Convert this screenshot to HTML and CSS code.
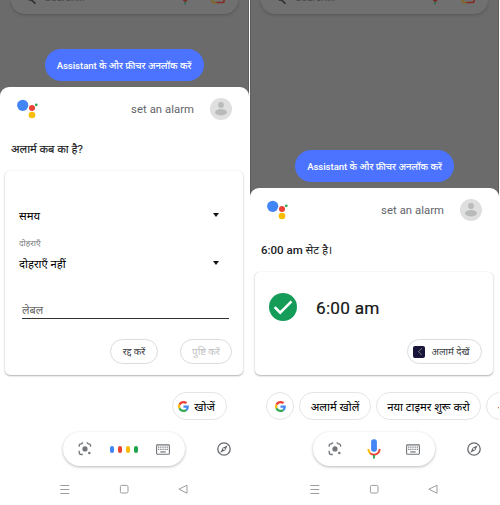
FILE: index.html
```html
<!DOCTYPE html>
<html lang="hi">
<head>
<meta charset="utf-8">
<title>Assistant</title>
<link rel="stylesheet" href="styles.css">
</head>
<body>
<svg class="defs" width="0" height="0" aria-hidden="true">
  <symbol id="logo" viewBox="0 0 22 21"><circle cx="5.7" cy="6.3" r="5.6" fill="#4285f4"/><circle cx="15" cy="9" r="3" fill="#ea4335"/><circle cx="19.3" cy="5.8" r="1.4" fill="#34a853"/><circle cx="15" cy="16" r="3.3" fill="#fbbc04"/></symbol>
  <symbol id="avatar" viewBox="0 0 22 22"><circle cx="11" cy="11" r="11" fill="#dfdfdf"/><circle cx="11" cy="7" r="2.9" fill="#b9bbbb"/><ellipse cx="11" cy="14.3" rx="5.9" ry="3.2" fill="#b9bbbb"/></symbol>
  <symbol id="google" viewBox="0 0 48 48"><path fill="#ea4335" d="M24 9.5c3.54 0 6.71 1.22 9.21 3.6l6.85-6.85C35.9 2.38 30.47 0 24 0 14.62 0 6.51 5.38 2.56 13.22l7.98 6.19C12.43 13.72 17.74 9.5 24 9.5z"/><path fill="#4285f4" d="M46.98 24.55c0-1.57-.15-3.09-.38-4.55H24v9.02h12.94c-.58 2.96-2.26 5.48-4.78 7.18l7.73 6c4.51-4.18 7.09-10.36 7.09-17.65z"/><path fill="#fbbc05" d="M10.53 28.59a14.5 14.5 0 0 1 0-9.18l-7.98-6.19a24 24 0 0 0 0 21.56l7.98-6.19z"/><path fill="#34a853" d="M24 48c6.48 0 11.93-2.13 15.89-5.81l-7.73-6c-2.15 1.45-4.92 2.3-8.16 2.3-6.26 0-11.57-4.22-13.47-9.91l-7.98 6.19C6.51 42.62 14.62 48 24 48z"/></symbol>
  <symbol id="lens" viewBox="0 0 14 14"><g fill="none" stroke="#72767a" stroke-width="1.3"><path d="M1.2 4.8V3.7Q1.2 1.8 3.1 1.8H3.6L4.5.9H5.2M8.6.9h.7l.9.9h.5q1.9 0 1.9 1.9v1.1M1.2 8.8v1.5q0 2.2 2.2 2.2h1.4"/></g><circle cx="7" cy="6.9" r="2.6" fill="#72767a"/><circle cx="11.3" cy="11.1" r="1.25" fill="#72767a"/></symbol>
  <symbol id="keyboard" viewBox="0 0 14 11"><rect x=".6" y=".9" width="12.8" height="9.3" rx=".8" fill="#fff" stroke="#72767a" stroke-width="1.1"/><path d="M2.1 3.2h9.9M2.1 5.4h9.9" stroke="#72767a" stroke-width="1.3" stroke-dasharray="1.2 .95"/><path d="M4.3 7.9h5.4" stroke="#72767a" stroke-width="1.2"/></symbol>
  <symbol id="compass" viewBox="0 0 14 14"><circle cx="7" cy="7" r="6.2" fill="none" stroke="#66696e" stroke-width="1.3"/><path fill="#66696e" fill-rule="evenodd" d="M10.7 3.3 8.3 8.3 3.3 10.7l2.4-5zM7 6.1a.9.9 0 1 0 0 1.8.9.9 0 0 0 0-1.8z"/></symbol>
  <symbol id="mic" viewBox="0 0 14 20"><rect x="4.1" y=".3" width="5.8" height="12.4" rx="2.6" fill="#4285f4"/><path d="M1.2 10Q1.6 13 3.4 14.4" fill="none" stroke="#fbbc04" stroke-width="1.9"/><path d="M3.2 14.2Q7 17.1 10.8 14.2 12.4 12.8 12.8 10" fill="none" stroke="#ea4335" stroke-width="1.9"/><path d="M7 16v3.4" stroke="#34a853" stroke-width="1.9"/></symbol>
  <symbol id="recents" viewBox="0 0 10 10"><path d="M.3 1.5h9M.3 5.5h9M.3 9.5h9" stroke="#929292" stroke-width=".9"/></symbol>
  <symbol id="home" viewBox="0 0 10 10"><rect x="1.4" y="1.4" width="7.6" height="7.6" rx="1.3" fill="none" stroke="#929292" stroke-width=".9"/></symbol>
  <symbol id="back" viewBox="0 0 10 10"><path d="M9 1.2v8L.9 5.2z" fill="none" stroke="#929292" stroke-width=".9"/></symbol>
  <symbol id="behind" viewBox="0 0 200 5"><path d="M.8 0h2.7l4 3.6" fill="none" stroke="#2b2d2e" stroke-width="1.5"/><path d="M154.7 0h5l-1.7 1.9h-1.6z" fill="#7d2c25"/><path d="M157.2 1.4v3" stroke="#2b6950" stroke-width="1.6"/><path d="M184.2 0v1q0 1.5 1.6 1.5h3" fill="none" stroke="#886317" stroke-width="1.6"/><path d="M188.5 2.5h6q1.6 0 1.6-1.5V0" fill="none" stroke="#842a21" stroke-width="1.6"/></symbol>
</svg>
<main class="screens">
  <section class="phone">
    <div class="backdrop">
      <div class="search"><svg class="search-icons"><use href="#behind"/></svg><span>Search...</span></div>
      <div class="unlock"><span>Assistant के और फ़ीचर अनलॉक करें</span></div>
    </div>
    <div class="sheet">
      <header><svg class="logo"><use href="#logo"/></svg><span class="query">set an alarm</span><svg class="avatar"><use href="#avatar"/></svg></header>
      <h1 class="ask">अलार्म कब का है?</h1>
      <div class="card form">
        <div class="select time"><span>समय</span><i class="caret"></i></div>
        <div class="hint">दोहराएँ</div>
        <div class="select repeat"><span>दोहराएँ नहीं</span><i class="caret"></i></div>
        <div class="field">लेबल</div>
        <div class="actions"><button class="cancel">रद्द करें</button><button class="confirm">पुष्टि करें</button></div>
      </div>
      <div class="chips end"><div class="chip find"><svg><use href="#google"/></svg><span>खोजें</span></div></div>
      <div class="controls">
        <div class="pill"><svg class="lens"><use href="#lens"/></svg><div class="bars"><i></i><i></i><i></i><i></i></div><svg class="keys"><use href="#keyboard"/></svg></div>
        <svg class="compass"><use href="#compass"/></svg>
      </div>
      <nav><svg><use href="#recents"/></svg><svg><use href="#home"/></svg><svg><use href="#back"/></svg></nav>
    </div>
  </section>
  <section class="phone">
    <div class="backdrop tall">
      <div class="search"><svg class="search-icons"><use href="#behind"/></svg><span>Search...</span></div>
      <div class="unlock"><span>Assistant के और फ़ीचर अनलॉक करें</span></div>
    </div>
    <div class="sheet">
      <header><svg class="logo"><use href="#logo"/></svg><span class="query">set an alarm</span><svg class="avatar"><use href="#avatar"/></svg></header>
      <h1 class="reply"><span>6:00 am</span> सेट है।</h1>
      <div class="card done">
        <div class="alarm"><svg viewBox="0 0 28 28"><circle cx="14" cy="14" r="14" fill="#159c58"/><path d="m5.7 14.2 5.5 5.5L22.5 8.3" fill="none" stroke="#fff" stroke-width="2.6"/></svg><span>6:00 am</span></div>
        <div class="actions"><button class="view"><svg viewBox="0 0 12 12"><rect width="12" height="12" rx="2" fill="#17163a"/><path d="m9.2 2.2-3.8 3.3 3.4 3.6" fill="none" stroke="#aaa6a0" stroke-width=".7"/></svg><span>अलार्म देखें</span></button></div>
      </div>
      <div class="chips">
        <div class="chip round"><svg><use href="#google"/></svg></div>
        <div class="chip open"><span>अलार्म खोलें</span></div>
        <div class="chip timer"><span>नया टाइमर शुरू करो</span></div>
        <div class="chip more"><span>अलार्म</span></div>
      </div>
      <div class="controls">
        <div class="pill"><svg class="lens"><use href="#lens"/></svg><svg class="mic"><use href="#mic"/></svg><svg class="keys"><use href="#keyboard"/></svg></div>
        <svg class="compass"><use href="#compass"/></svg>
      </div>
      <nav><svg><use href="#recents"/></svg><svg><use href="#home"/></svg><svg><use href="#back"/></svg></nav>
    </div>
  </section>
</main>
</body>
</html>
```
FILE: styles.css
```css
* { box-sizing: border-box; }
body { margin: 0; background: #fff; font-family: Roboto, "Noto Sans", sans-serif; color: #202124; }
svg { display: block; flex: none; }
.defs { position: absolute; }
.screens { display: grid; grid-template-columns: 249px 249px; gap: 1px; width: 500px; height: 505px; overflow: hidden; }
.phone { min-width: 0; overflow: hidden; }
.backdrop { height: 97px; margin-bottom: -10px; background: #6b6b6b; border-right: 1px solid #5c5c5c; display: flex; flex-direction: column; align-items: center; justify-content: space-between; padding-bottom: 16px; }
.backdrop.tall { height: 198px; border-left: 1px solid #5c5c5c; }
.search { width: 227px; height: 14px; border-radius: 0 0 16px 16px; background: #707070; box-shadow: 0 1px 3px #555; display: flex; }
.search-icons { width: 200px; height: 5px; margin-left: 17px; }
.search span { margin: -9px 0 0 -183px; font: 11px/14px Roboto, sans-serif; letter-spacing: -.3px; color: #484848; }
.unlock { width: 159px; height: 32px; border-radius: 16px; background: #4b73ff; color: #fff; font-size: 9.6px; font-weight: 500; letter-spacing: -.05px; display: flex; align-items: center; justify-content: center; white-space: nowrap; }
.sheet { position: relative; background: #fff; border-radius: 9px 9px 0 0; }
header { height: 44px; padding: 0 17px; display: flex; align-items: center; }
.logo { width: 22px; height: 21px; }
.query { margin-left: auto; margin-right: 16px; padding-top: 1px; font-size: 11.3px; color: #5f6368; letter-spacing: .05px; white-space: nowrap; }
.avatar { width: 22px; height: 22px; }
h1 { margin: 0; padding-left: 11px; height: 40px; line-height: 37px; font-size: 11.5px; font-weight: 400; white-space: nowrap; }
h1 span { font-weight: 500; }
.ask { font-size: 11.2px; line-height: 38px; -webkit-text-stroke: .15px #202124; }
.card { width: 238px; margin-left: 5px; border-radius: 5px; background: #fff; box-shadow: 0 1px 2px rgba(0,0,0,.3), 0 0 1px rgba(0,0,0,.15); }
.form { height: 204px; padding-top: 33px; }
.select { height: 22px; padding: 0 24px 0 14px; display: flex; align-items: center; justify-content: space-between; font-size: 11.3px; color: #000; }
.caret { border: 3.5px solid transparent; border-top: 4px solid #111; border-bottom: 0; }
.hint { height: 26px; padding-left: 14px; line-height: 35px; font-size: 8.5px; color: #77797b; }
.field { width: 207px; height: 45px; margin: 0 0 20px 17px; border-bottom: 1px solid #333; font-size: 11px; line-height: 73px; color: #666; }
.actions { display: flex; justify-content: flex-end; gap: 22px; padding-right: 11px; }
button { height: 25px; padding: 0; border: 1px solid #dadce0; border-radius: 13px; background: #fff; font: 400 9.8px Roboto, "Noto Sans", sans-serif; color: #3c4043; display: flex; align-items: center; justify-content: center; white-space: nowrap; }
.cancel { width: 48px; }
.confirm { width: 52px; color: #c0c1c3; }
.chips { height: 28px; margin-top: 17px; padding-left: 16px; display: flex; gap: 5px; }
.chips.end { justify-content: flex-end; padding-right: 22px; }
.chip { flex: none; height: 28px; border: 1px solid #e5e5e5; border-radius: 14px; display: flex; align-items: center; justify-content: center; font-size: 11.3px; color: #000; white-space: nowrap; }
.chip svg { width: 11px; height: 11px; }
.find { width: 55px; gap: 5px; padding-right: 6px; }
.round { width: 28px; }
.open { width: 72px; }
.timer { width: 105px; }
.more { width: 80px; justify-content: flex-start; padding-left: 11px; }
.controls { height: 34px; margin-top: 12px; padding: 0 18px 0 63px; display: flex; align-items: center; justify-content: space-between; }
.pill { width: 122px; height: 34px; border-radius: 17px; box-shadow: 0 1px 3px rgba(0,0,0,.28); display: flex; align-items: center; justify-content: space-between; padding: 0 15px; }
.lens, .compass { width: 14px; height: 14px; }
.keys { width: 14px; height: 11px; }
.mic { width: 14px; height: 20px; }
.bars { display: flex; gap: 4px; }
.bars i { width: 4px; height: 7px; border-radius: 2px; background: #4285f4; }
.bars i:nth-child(2) { background: #ea4335; }
.bars i:nth-child(3) { background: #fbbc04; }
.bars i:nth-child(4) { background: #1ea54c; }
nav { margin-top: 18px; padding: 0 61px 0 60px; display: flex; justify-content: space-between; }
nav svg { width: 10px; height: 10px; }
.done { height: 103px; padding-top: 21px; }
.alarm { height: 28px; margin-left: 14px; display: flex; align-items: center; gap: 19px; font-size: 17.2px; font-weight: 400; -webkit-text-stroke: .2px #151515; color: #151515; letter-spacing: .25px; }
.alarm span { padding-top: 2px; }
.alarm svg { width: 28px; height: 28px; }
.done .actions { margin-top: 18px; }
.view { width: 75px; gap: 6px; padding-right: 6px; }
.view svg { width: 12px; height: 12px; }
```
